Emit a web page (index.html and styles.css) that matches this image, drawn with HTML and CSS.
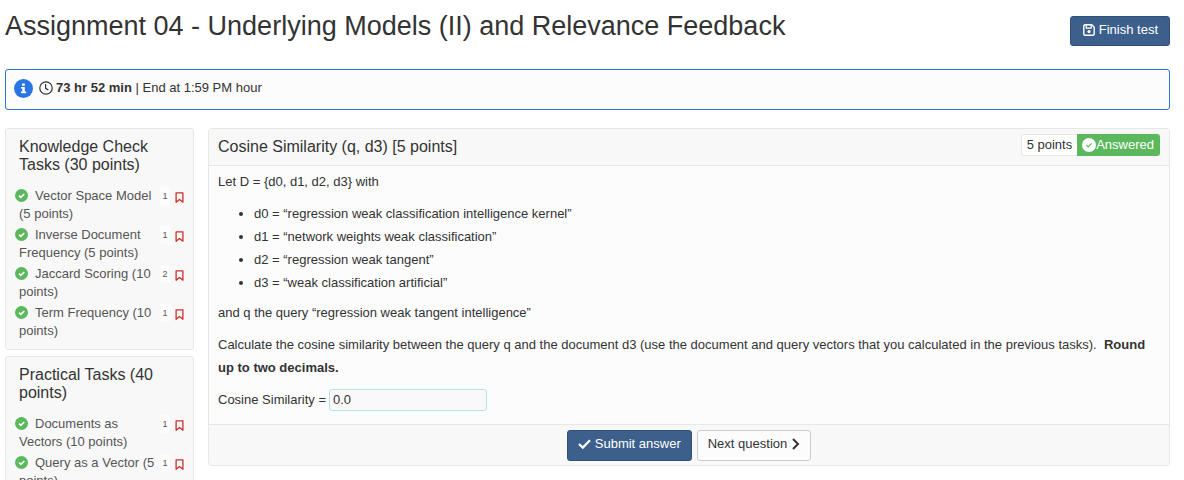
FILE: index.html
```html
<!DOCTYPE html>
<html lang="en">
<head>
<meta charset="utf-8">
<title>Assignment 04</title>
<link rel="stylesheet" href="styles.css">
</head>
<body>
<svg class="sprite" aria-hidden="true">
  <symbol id="done" viewBox="0 0 13 13"><circle cx="6.5" cy="6.5" r="6.5" fill="#5cb85c"/><path d="M4 6.6l1.8 1.8L9.3 5" fill="none" stroke="#fff" stroke-width="1.5"/></symbol>
  <symbol id="mark" viewBox="0 0 9 11"><path d="M1.1 .8h6.8v9.400L4.5 7.400 1.1 10.200z" fill="none" stroke="#c9302c" stroke-width="1.3" stroke-linejoin="round"/></symbol>
</svg>
<header class="top">
  <h1 class="title">Assignment 04 - Underlying Models (II) and Relevance Feedback</h1>
  <button class="btn btn-primary btn-finish" type="button">
    <svg width="12" height="12" viewBox="0 0 12 12"><path d="M.8 2A1.2 1.2 0 0 1 2 .8h6.8l2.4 2.4V10A1.2 1.2 0 0 1 10 11.200H2A1.200 1.200 0 0 1 .8 10z" fill="none" stroke="#fff" stroke-width="1.4"/><path d="M3.200 1v3.200h5V1" fill="none" stroke="#fff" stroke-width="1.200"/><circle cx="6" cy="7.600" r="1.600" fill="#fff"/></svg>
    Finish test
  </button>
</header>
<div class="notice">
  <svg width="19" height="19" viewBox="0 0 19 19"><circle cx="9.500" cy="9.500" r="9.500" fill="#2a75e6"/><path d="M8 4.500h2.800v2.200H8zM7 7.900h3.800v4.700h1.300v1.700H7v-1.700h1.300v-3H7z" fill="#fff"/></svg>
  <svg class="clock" width="14" height="14" viewBox="0 0 14 14" fill="none" stroke="#333" stroke-width="1.200"><circle cx="7" cy="7" r="6.200"/><path d="M6.600 3v4.300l2.800 1.800"/></svg>
  <span><b>73 hr 52 min</b> | End at 1:59 PM hour</span>
</div>
<div class="columns">
  <nav class="side">
    <section class="card tasks">
      <h2 class="heading">Knowledge Check Tasks (30 points)</h2>
      <ul class="task-list">
        <li class="task"><a class="task-name" href="#"><svg class="done"><use href="#done"/></svg>Vector Space Model (5 points)</a><span class="count">1</span><svg class="mark"><use href="#mark"/></svg></li>
        <li class="task"><a class="task-name" href="#"><svg class="done"><use href="#done"/></svg>Inverse Document Frequency (5 points)</a><span class="count">1</span><svg class="mark"><use href="#mark"/></svg></li>
        <li class="task"><a class="task-name" href="#"><svg class="done"><use href="#done"/></svg>Jaccard Scoring (10 points)</a><span class="count">2</span><svg class="mark"><use href="#mark"/></svg></li>
        <li class="task"><a class="task-name" href="#"><svg class="done"><use href="#done"/></svg>Term Frequency (10 points)</a><span class="count">1</span><svg class="mark"><use href="#mark"/></svg></li>
      </ul>
    </section>
    <section class="card tasks">
      <h2 class="heading">Practical Tasks (40 points)</h2>
      <ul class="task-list">
        <li class="task"><a class="task-name" href="#"><svg class="done"><use href="#done"/></svg>Documents as Vectors (10 points)</a><span class="count">1</span><svg class="mark"><use href="#mark"/></svg></li>
        <li class="task"><a class="task-name" href="#"><svg class="done"><use href="#done"/></svg>Query as a Vector (5 points)</a><span class="count">1</span><svg class="mark"><use href="#mark"/></svg></li>
      </ul>
    </section>
  </nav>
  <main class="card question">
    <div class="question-head">
      <h2 class="heading">Cosine Similarity (q, d3) [5 points]</h2>
      <div class="status">
        <span class="points">5 points</span>
        <span class="answered"><svg width="14" height="14" viewBox="0 0 14 14"><circle cx="7" cy="7" r="7" fill="#fff"/><path d="M4.300 7.200l1.800 1.800 3.500-3.600" fill="none" stroke="#5cb85c" stroke-width="1.100"/></svg>Answered</span>
      </div>
    </div>
    <div class="question-body">
      <p>Let D = {d0, d1, d2, d3} with</p>
      <ul class="docs">
        <li>d0 = “regression weak classification intelligence kernel”</li>
        <li>d1 = “network weights weak classification”</li>
        <li>d2 = “regression weak tangent”</li>
        <li>d3 = “weak classification artificial”</li>
      </ul>
      <p>and q the query “regression weak tangent intelligence”</p>
      <p>Calculate the cosine similarity between the query q and the document d3 (use the document and query vectors that you calculated in the previous tasks).&nbsp; <b>Round up to two decimals.</b></p>
      <div class="answer">
        <label for="answer">Cosine Similarity =</label>
        <input class="field" id="answer" type="text" value="0.0">
      </div>
    </div>
    <div class="question-foot">
      <button class="btn btn-primary" type="button">
        <svg width="13" height="12" viewBox="0 0 13 12"><path d="M1 6l3.800 3.600L12 2.200" fill="none" stroke="#fff" stroke-width="2.200"/></svg>
        Submit answer
      </button>
      <button class="btn" type="button">
        Next question
        <svg class="next" width="9" height="12" viewBox="0 0 9 12"><path d="M2 1l5 5-5 5" fill="none" stroke="#333" stroke-width="2"/></svg>
      </button>
    </div>
  </main>
</div>
</body>
</html>
```

FILE: styles.css
```css
* { box-sizing: border-box; }
body {
  margin: 0;
  height: 100vh;
  overflow: hidden;
  padding: 8px 14px 0 5px;
  background: #fff;
  color: #333;
  font: 13px/18px "Liberation Sans", Arial, sans-serif;
}
svg { flex: none; }
h1, h2, p, ul { margin: 0; padding: 0; font-weight: 400; }
.sprite { position: absolute; width: 0; height: 0; }

.top {
  display: flex;
  justify-content: space-between;
  align-items: flex-start;
  height: 61px;
}
.title { font-size: 27px; line-height: 36px; }
.btn {
  display: flex;
  align-items: center;
  height: 31px;
  padding: 0 10px 4px;
  gap: 4px;
  border: 1px solid #ccc;
  border-radius: 3px;
  background: #fcfcfc;
  color: #333;
  font: inherit;
}
.btn-primary { border-color: #2e527c; background: #3c5f8c; color: #fff; }
.btn-finish { margin-top: 8px; height: 30px; padding: 0 11px 2px 12px; }

.notice {
  display: flex;
  align-items: center;
  height: 41px;
  padding: 0 8px 2px;
  border: 1px solid #2a75d8;
  border-radius: 3px;
  background: #fcfcfc;
}
.clock { margin: 0 3px 2px 6px; }
.notice span { padding-bottom: 2px; }

.columns { display: flex; align-items: flex-start; gap: 14px; margin-top: 18px; }
.card { border: 1px solid #e7e7e7; border-radius: 3px; background: #f8f8f8; }
.heading { font-size: 16px; line-height: 18px; }

.side { flex: 0 0 189px; display: flex; flex-direction: column; gap: 6px; }
.tasks { padding: 9px 9px 6px 13px; }
.task-list { list-style: none; margin-top: 13px; }
.task { display: grid; grid-template-columns: 1fr 10px 9px; column-gap: 5px; margin-bottom: 3px; }
.task-name { margin-right: -4px; color: #555; text-decoration: none; }
.done { width: 13px; height: 13px; margin: 0 7px 0 -4px; vertical-align: -2px; }
.count { height: 18px; background: #fcfcfc; color: #555; font-size: 9px; text-align: center; }
.mark { width: 9px; height: 11px; margin-top: 5px; }

.question { flex: 1; background: #fcfcfc; }
.question-head {
  display: flex;
  align-items: center;
  justify-content: space-between;
  height: 37px;
  padding: 0 9px;
  border-bottom: 1px solid #e7e7e7;
  background: #f8f8f8;
}
.status { display: flex; height: 22px; margin-bottom: 4px; line-height: 20px; }
.points { padding: 0 5px; border: 1px solid #e7e7e7; border-right: 0; border-radius: 3px 0 0 3px; background: #fff; }
.answered { display: flex; align-items: center; padding: 0 6px 0 5px; border-radius: 0 3px 3px 0; background: #5cb85c; color: #fff; }

.question-body { padding: 4px 9px 13px; line-height: 23px; }
.question-body p { margin-bottom: 9px; }
.docs { margin-bottom: 7px; padding-left: 36px; }
.answer { display: flex; align-items: center; gap: 3px; }
.field {
  width: 158px;
  height: 22px;
  padding: 0 3px;
  border: 1px solid #b6e4ee;
  border-radius: 3px;
  background: #f9f9f9;
  color: #333;
  font: inherit;
}
.question-foot {
  display: flex;
  justify-content: center;
  gap: 5px;
  padding: 5px 0 4px;
  border-top: 1px solid #e7e7e7;
  background: #f8f8f8;
}
```
